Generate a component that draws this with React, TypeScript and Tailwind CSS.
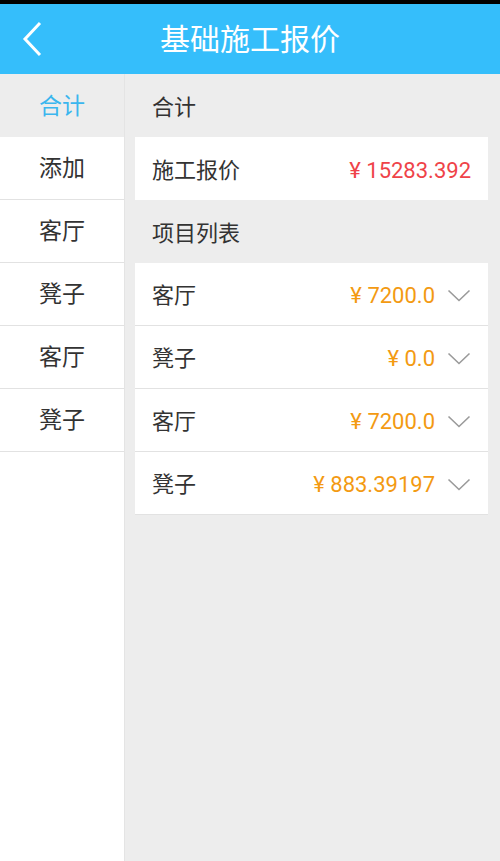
import React from 'react';

const font = { fontFamily: '"Roboto", "Noto Sans CJK SC", sans-serif' };

const sideItems = ['添加', '客厅', '凳子', '客厅', '凳子'];

const projects = [
  { name: '客厅', price: '¥ 7200.0' },
  { name: '凳子', price: '¥ 0.0' },
  { name: '客厅', price: '¥ 7200.0' },
  { name: '凳子', price: '¥ 883.39197' },
];

function Chevron() {
  return (
    <svg width="24" height="14" viewBox="0 0 24 14" fill="none" className="ml-3">
      <path d="M1.5 1.5 L12 11.5 L22.5 1.5" stroke="#9a9a9a" strokeWidth="1.6" />
    </svg>
  );
}

export default function App() {
  return (
    <div className="w-[500px] h-[861px] flex flex-col bg-[#ededed] overflow-hidden" style={font}>
      {/* Status strip + title bar */}
      <div className="h-[4px] bg-black" />
      <header className="h-[70px] bg-[#35befb] flex items-center relative">
        <svg width="26" height="36" viewBox="0 0 26 36" fill="none" className="ml-[20px]">
          <path d="M20 2 L5 18 L20 34" stroke="white" strokeWidth="3" />
        </svg>
        <h1 className="absolute left-0 right-0 text-center text-[30px] text-white pointer-events-none">
          基础施工报价
        </h1>
      </header>

      {/* Body */}
      <div className="flex flex-1">
        {/* Side nav */}
        <div className="w-[125px] bg-white border-r border-[#e4e4e4] flex flex-col">
          <div className="h-[63px] pt-[3px] bg-[#ededed] flex items-center justify-center text-[23px] text-[#3bb6ee]">
            合计
          </div>
          {sideItems.map((item, i) => (
            <div
              key={i}
              className="h-[63px] pt-[3px] border-b border-[#e2e2e2] flex items-center justify-center text-[23px] text-[#333]"
            >
              {item}
            </div>
          ))}
        </div>

        {/* Main list */}
        <div className="flex-1 flex flex-col pl-[10px] pr-[12px]">
          <div className="h-[63px] pt-[3px] flex items-center pl-[17px] text-[22px] text-[#333]">合计</div>
          <div className="h-[63px] pt-[3px] bg-white flex items-center justify-between pl-[17px] pr-[17px]">
            <span className="text-[22px] text-[#333]">施工报价</span>
            <span className="text-[22px] text-[#ef4349]">¥ 15283.392</span>
          </div>
          <div className="h-[63px] pt-[3px] flex items-center pl-[17px] text-[22px] text-[#333]">项目列表</div>
          {projects.map((p, i) => (
            <div
              key={i}
              className="h-[63px] pt-[3px] bg-white border-b border-[#e2e2e2] flex items-center pl-[17px] pr-[17px]"
            >
              <span className="text-[22px] text-[#333] flex-1">{p.name}</span>
              <span className="text-[22px] text-[#f39a12]">{p.price}</span>
              <Chevron />
            </div>
          ))}
        </div>
      </div>
    </div>
  );
}
